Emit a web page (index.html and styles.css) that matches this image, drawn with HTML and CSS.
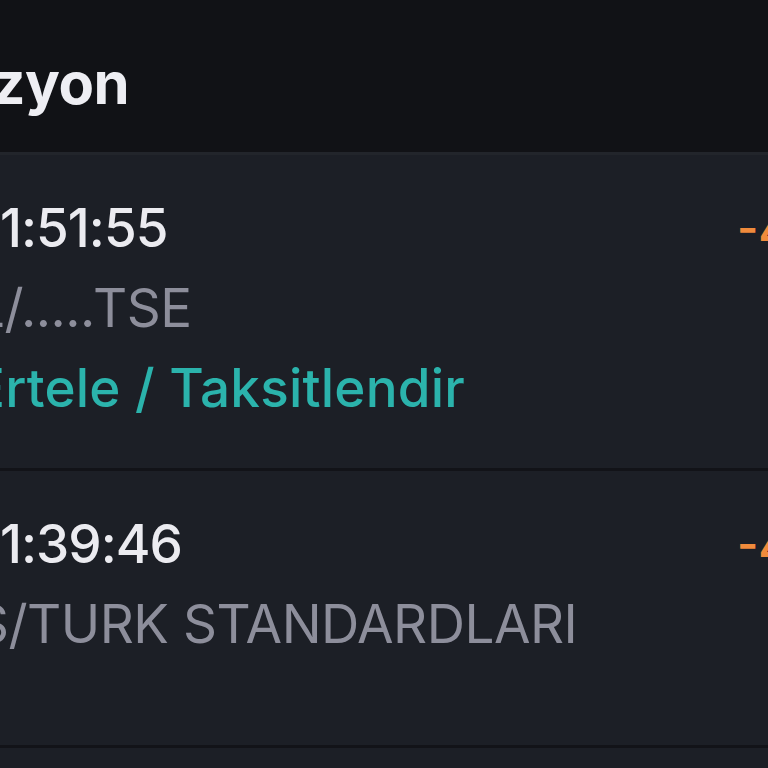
FILE: index.html
```html
<!DOCTYPE html>
<html lang="tr">
<head>
<meta charset="utf-8">
<title>Provizyon</title>
<link rel="stylesheet" href="styles.css">
</head>
<body>
<div class="screen">
  <header class="topbar">
    <h1 class="title">Provizyon</h1>
  </header>
  <main class="list">
    <div class="row">
      <div class="info">
        <div class="time">1:51:55</div>
        <div class="desc">L/.....TSE</div>
        <div class="action">Ertele / Taksitlendir</div>
      </div>
      <div class="amount">-4.250,00 TL</div>
    </div>
    <div class="row row-short">
      <div class="info">
        <div class="time">1:39:46</div>
        <div class="desc">S/TURK STANDARDLARI</div>
      </div>
      <div class="amount">-4.250,00 TL</div>
    </div>
    <div class="row row-next"></div>
  </main>
</div>
</body>
</html>
```
FILE: styles.css
```css
html, body {
  margin: 0;
  padding: 0;
  background: #1c1f26;
  overflow: hidden;
  width: 768px;
  height: 768px;
}
.screen {
  width: 768px;
  height: 768px;
  display: flex;
  flex-direction: column;
  font-family: Inter, "Noto Sans", sans-serif;
}
.topbar {
  background: #111216;
  height: 152px;
  box-sizing: border-box;
  padding-top: 14px;
  display: flex;
  align-items: center;
  flex-shrink: 0;
  overflow: hidden;
}
.title {
  margin: 0 0 0 -150px;
  font-size: 58px;
  font-weight: 700;
  color: #eeeef3;
  line-height: 1;
  letter-spacing: -0.5px;
  white-space: nowrap;
}
.list {
  border-top: 3px solid #22252b;
  background: #1c1f26;
  flex: 1;
}
.row {
  display: grid;
  grid-template-columns: 755px auto;
  margin-left: -18px;
  padding: 33px 0 40px;
  border-bottom: 3px solid #121318;
  white-space: nowrap;
}
.row-short {
  padding-bottom: 81px;
}
.row-next {
  border-bottom: none;
}
.info {
  display: flex;
  flex-direction: column;
}
.time, .desc, .action {
  font-size: 53px;
  line-height: 80px;
}
.time {
  color: #ebebf0;
  font-weight: 500;
  letter-spacing: -1px;
  margin-left: 18px;
}
.desc {
  color: #8d8e9b;
  font-weight: 400;
  letter-spacing: -0.5px;
  margin-left: -7px;
}
.action {
  color: #2bb3ac;
  font-weight: 500;
  letter-spacing: 0.2px;
  margin-left: -9px;
}
.amount {
  color: #f08b3c;
  font-size: 46px;
  font-weight: 600;
  line-height: 80px;
  padding-top: 2px;
}
```
